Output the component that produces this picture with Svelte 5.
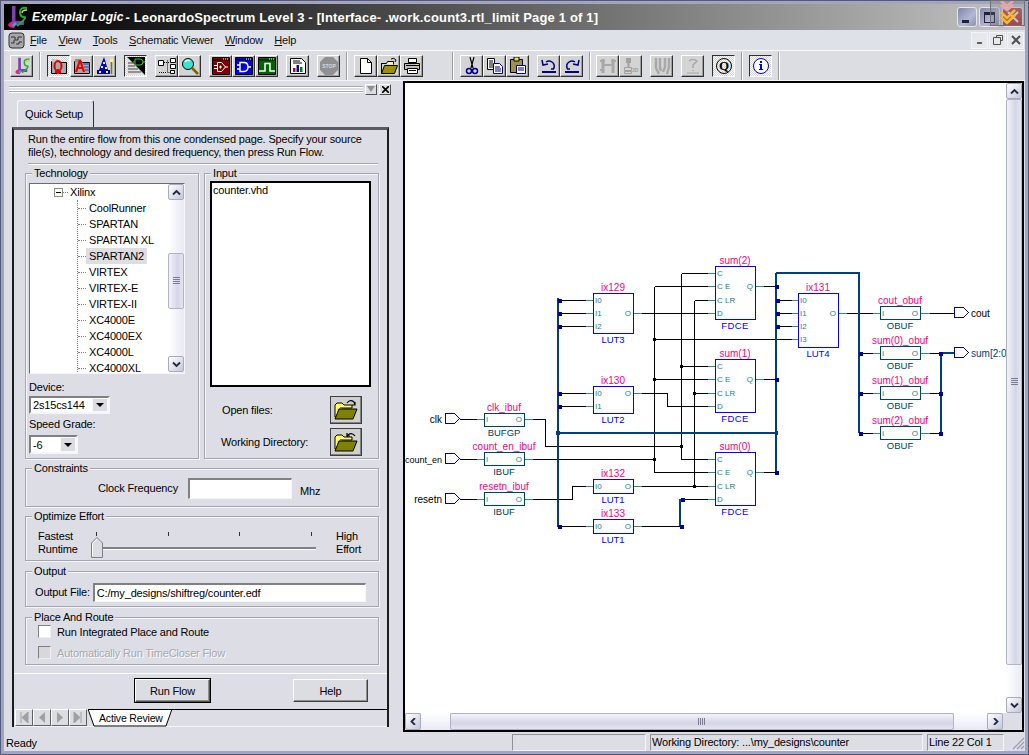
<script>
  const techItems = ['CoolRunner','SPARTAN','SPARTAN XL','SPARTAN2','VIRTEX','VIRTEX-E','VIRTEX-II','XC4000E','XC4000EX','XC4000L','XC4000XL'];

  const thin = [
    'M459 419H476','M532 419H545V446H681','M459 459H476','M532 459H654','M459 499H476','M532 499H572V486H585',
    'M558 300H585','M558 313H585','M558 326H585','M558 393H585','M558 406H585','M558 526H585',
    'M641 313H707','M641 393H667V406H707','M641 486H707','M641 526H680','M682 499H707',
    'M654 286V472','M654 286H707','M654 379H707','M654 472H707','M654 339H791',
    'M681 273V459','M681 273H707','M681 366H707','M681 459H707',
    'M694 300V486','M694 300H707','M694 393H707',
    'M763 286H776','M763 379H776','M763 472H776',
    'M776 300H791','M776 313H791','M776 326H791',
    'M846 313H872','M859 353H872','M859 393H872','M859 433H872',
    'M929 313H954','M929 353H940','M929 393H940','M929 433H940'
  ];
  const teal = [
    'M476 419H484','M524 419H532','M476 459H484','M524 459H532','M476 499H484','M524 499H532',
    'M585 300H593','M585 313H593','M585 326H593','M633 313H641','M585 393H593','M585 406H593','M633 393H641',
    'M585 486H593','M633 486H641','M585 526H593','M633 526H641',
    'M707 273H715','M707 286H715','M707 300H715','M707 313H715','M755 286H763',
    'M707 366H715','M707 379H715','M707 393H715','M707 406H715','M755 379H763',
    'M707 459H715','M707 472H715','M707 486H715','M707 499H715','M755 472H763',
    'M791 300H798','M791 313H798','M791 326H798','M791 339H798','M838 313H846',
    'M872 313H880','M920 313H929','M872 353H880','M920 353H929','M872 393H880','M920 393H929','M872 433H880','M920 433H929'
  ];
  const bus = [
    'M558 298V527','M558 433H776','M776 273V473','M776 273H859V433','M941 353V433','M941 353H954','M680 499V526'
  ];
  const busDots = [
    [558,299],[558,312],[558,325],[558,392],[558,405],[558,525],[680,525],[681,498],
    [775,285],[775,378],[775,471],[776,299],[776,312],[776,325],
    [859,352],[859,392],[859,432],[939,352],[939,392],[939,432]
  ];
  const junctions = [[654,339],[654,379],[654,459],[681,366],[681,446],[694,393],[694,486]];

  const ports = [
    {x:445,y:419,label:'clk',out:false},{x:445,y:459,label:'count_en',out:false,tight:true},{x:445,y:499,label:'resetn',out:false},
    {x:954,y:313,label:'cout',out:true},{x:954,y:353,label:'sum[2:0',out:true,bus:true}
  ];

  const cells = [
    {x:593,y:293,w:40,h:40,name:'ix129',type:'LUT3',pins:[['I0',300],['I1',313],['I2',326]],out:['O',313]},
    {x:593,y:386,w:40,h:27,name:'ix130',type:'LUT2',pins:[['I0',393],['I1',406]],out:['O',393]},
    {x:593,y:479,w:40,h:14,name:'ix132',type:'LUT1',pins:[['I0',486]],out:['O',486]},
    {x:593,y:519,w:40,h:14,name:'ix133',type:'LUT1',pins:[['I0',526]],out:['O',526]},
    {x:715,y:266,w:40,h:53,name:'sum(2)',type:'FDCE',ff:true,pins:[['C',273],['C E',286],['C LR',300],['D',313]],out:['Q',286]},
    {x:715,y:359,w:40,h:53,name:'sum(1)',type:'FDCE',ff:true,pins:[['C',366],['C E',379],['C LR',393],['D',406]],out:['Q',379]},
    {x:715,y:452,w:40,h:53,name:'sum(0)',type:'FDCE',ff:true,pins:[['C',459],['C E',472],['C LR',486],['D',499]],out:['Q',472]},
    {x:798,y:293,w:40,h:54,name:'ix131',type:'LUT4',pins:[['I0',300],['I1',313],['I2',326],['I3',339]],out:['O',313]},
    {x:484,y:413,w:40,h:13,name:'clk_ibuf',type:'BUFGP',pins:[['I',419]],out:['O',419],buf:true},
    {x:484,y:452,w:40,h:13,name:'count_en_ibuf',type:'IBUF',pins:[['I',459]],out:['O',459],buf:true},
    {x:484,y:492,w:40,h:13,name:'resetn_ibuf',type:'IBUF',pins:[['I',499]],out:['O',499],buf:true},
    {x:880,y:306,w:40,h:13,name:'cout_obuf',type:'OBUF',pins:[['I',313]],out:['O',313],buf:true},
    {x:880,y:346,w:40,h:13,name:'sum(0)_obuf',type:'OBUF',pins:[['I',353]],out:['O',353],buf:true},
    {x:880,y:386,w:40,h:13,name:'sum(1)_obuf',type:'OBUF',pins:[['I',393]],out:['O',393],buf:true},
    {x:880,y:426,w:40,h:13,name:'sum(2)_obuf',type:'OBUF',pins:[['I',433]],out:['O',433],buf:true}
  ];

  const toolbar = [
    [['ls']], 'sep',
    [['qfolder',1],['afolder'],['wizard']],
    [['schem',1]],
    [['hier'],['search']],
    [['redwin'],['bluewin'],['greenwin']],
    [['report']],
    [['stop']], 'sep',
    [['newdoc'],['open'],['print']], 'wide',
    [['cut'],['copy'],['paste']],
    [['undo'],['redo']], 'sepn',
    [['d1'],['d2']],
    [['d3']],
    [['d4']],
    [['qq',1]], 'sep',
    [['info',1]], 'sep'
  ];
  const menus = [['F','ile'],['V','iew'],['T','ools'],['S','chematic Viewer'],['W','indow'],['H','elp']];
</script>

{#snippet lsLogo(s)}
  <svg width={s} height={s} viewBox="0 0 24 24">
    <path d="M7 1h3.500v15H19v4H7z" fill="#7a3fb0"/>
    <path d="M3 20q3-6 8-2l-2 5q-5 0-6-3z" fill="#e0208a"/>
    <path d="M7 20l3-3 2 2-3 3z" fill="#1ab0e0"/>
    <path d="M22 3q-7-1-7 4t4 5-7 9" fill="none" stroke="#2aa838" stroke-width="2"/>
    <path d="M22 5q-5 0-5 3" fill="none" stroke="#b0e040" stroke-width="1.500"/>
  </svg>
{/snippet}

{#snippet openFolder(flag)}
  <svg width="24" height="22" viewBox="0 0 24 22">
    <path d="M1 6l2-2h5l2 2h8v3H6l-3 9H1z" fill="#ffff60" stroke="#000" stroke-width="1"/>
    <path d="M3 9h5v9H3z" fill="#f8e000" opacity=".7"/>
    <path d="M5 10h18l-4 10H1z" fill="#808000" stroke="#000" stroke-width="1"/>
    {#if flag === 'a'}
      <path d="M13 4q3-4 7-1l1 3M21 3v3h-3" fill="none" stroke="#000" stroke-width="1.200"/>
    {:else}
      <path d="M21 5q-3-4-7-1l-1 2M13 2v3h3" fill="none" stroke="#000" stroke-width="1.200"/>
    {/if}
  </svg>
{/snippet}

{#snippet icon(n)}
  {#if n === 'ls'}
    {@render lsLogo(18)}
  {:else}
  <svg width="18" height="18" viewBox="0 0 18 18" class="ico">
    {#if n === 'qfolder' || n === 'afolder'}
      <path d="M1.500 4.500h7l1 1h7v11h-15z" fill="#a8a8a8" stroke="#000"/>
      <path d="M2 2h6v3H2z" fill={n === 'qfolder' ? '#c8c8c8' : '#9a8a8a'}/>
      {#if n === 'qfolder'}
        <ellipse cx="8" cy="9" rx="3.500" ry="5" fill="none" stroke="#e00000" stroke-width="2"/>
        <path d="M8 12v5M5 15h6" stroke="#e00000" stroke-width="2"/>
      {:else}
        <path d="M7 3L3 15M7 3l4 12M4.500 11h6" fill="none" stroke="#f00000" stroke-width="2.200"/>
        <path d="M10 7h7M11 10h6M12 13h5" stroke="#2040c0"/>
      {/if}
    {:else if n === 'wizard'}
      <path d="M8 0L3 13h9z" fill="#0000c8"/>
      <path d="M1 13h13v4H1z" fill="#0000a0"/>
      <path d="M7 5h2v2H7zM5 9h2v2H5zM9 10h2v2H9zM3 14h2v2H3zM10 14h2v2h-2z" fill="#ffff00"/>
      <path d="M15.500 5v12" stroke="#807000" stroke-width="1.500"/>
      <path d="M14 2h3v3h-3z" fill="#fff080"/>
    {:else if n === 'schem'}
      <path d="M0 0h18v18z" fill="#000"/>
      <path d="M0 1l16 17H0z" fill="#e0e0e0"/>
      <path d="M1 6h5M1 9h7M1 12h10M1 15h13" stroke="#444"/>
      <path d="M8 2h5q3 0 3 3t-3 3H8z" fill="#000" stroke="#30d030"/>
      <path d="M6 5h2M16 5h2" stroke="#30d030"/>
    {:else if n === 'hier'}
      <path d="M.5 3.500h5v5h-5zM12.500 1.500h5v4h-5zM12.500 7.500h5v4h-5zM12.500 13.500h4v3h-4z" fill="#fff" stroke="#000"/>
      <path d="M6 5.500h6M9.500 3.500v12h3M1 15.500h8" fill="none" stroke="#000" stroke-dasharray="1 1"/>
    {:else if n === 'search'}
      <circle cx="7" cy="7" r="5.500" fill="#40e0d0" stroke="#000"/>
      <path d="M4 5q2-3 5-1" fill="none" stroke="#fff" stroke-width="1.500"/>
      <path d="M11 11l6 6" stroke="#806000" stroke-width="2.500"/>
    {:else if n === 'redwin' || n === 'bluewin' || n === 'greenwin'}
      <path d="M.5 .5h17v17H.5z" fill={n === 'redwin' ? '#800000' : n === 'bluewin' ? '#0000d8' : '#006400'} stroke="#000"/>
      <path d="M1 3h16" stroke="#000"/>
      <path d="M11 2h1M13 2h1M15 2h1" stroke="#fff"/>
      {#if n === 'redwin'}
        <path d="M5.500 5.500h4l4 4.500-4 4.500h-4z" fill="none" stroke="#fff"/>
        <path d="M2 8.500h3.500M2 11.500h3.500M13 10h3M7 10h3M8.500 8.500v3" stroke="#fff"/>
      {:else if n === 'bluewin'}
        <path d="M5 5.500h4q4 0 4 4.500t-4 4.500H5z" fill="none" stroke="#fff" stroke-width="1.400"/>
        <path d="M2 8h3M2 12h3M13 10h3" stroke="#fff" stroke-width="1.400"/>
      {:else}
        <path d="M1 14h6V6.500h5V14h5" fill="none" stroke="#fff" stroke-width="1.500"/>
      {/if}
    {:else if n === 'report'}
      <path d="M1.500 1.500h11l4 4v11h-15z" fill="#fff" stroke="#000"/>
      <path d="M4 4h7M4 6h9" stroke="#000"/>
      <path d="M4 11h2.500v4H4z" fill="#e00000"/><path d="M7.500 8h2.500v7H7.500z" fill="#0000c0"/><path d="M11 10h2.500v5H11z" fill="#008000"/>
    {:else if n === 'stop'}
      <path d="M5 0h8l5 5v8l-5 5H5l-5-5V5z" fill="#909090"/>
      <text x="9" y="11" text-anchor="middle" class="stop">STOP</text>
    {:else if n === 'newdoc'}
      <path d="M3.500 1.500h7l4 4v11h-11z" fill="#fff" stroke="#000"/><path d="M10.500 1.500v4h4" fill="none" stroke="#000"/>
    {:else if n === 'open'}
      <path d="M1.500 6.500h5l1-2h6v3" fill="#ffff90" stroke="#000"/>
      <path d="M1.500 6v10.500l3-8h13l-3 8h-13" fill="#a09000" stroke="#000"/>
      <path d="M11 2q3-2 5 1l-1 2" fill="none" stroke="#000"/>
    {:else if n === 'print'}
      <path d="M5.500 1.500h8v4h-8z" fill="#fff" stroke="#000"/>
      <path d="M1.500 6.500h15v6h-15z" fill="#c0c0c0" stroke="#000"/>
      <path d="M4.500 11.500h10v5h-10z" fill="#fff" stroke="#000"/>
      <path d="M3 8.500h13M6 13.500h7" stroke="#000"/>
      <path d="M13 7h2v1h-2z" fill="#ffff00"/>
    {:else if n === 'cut'}
      <path d="M7 0l3 11M11 0L8 11" stroke="#000" stroke-width="1.200" fill="none"/>
      <circle cx="6" cy="14" r="2.500" fill="none" stroke="#000080" stroke-width="1.500"/>
      <circle cx="12" cy="14" r="2.500" fill="none" stroke="#000080" stroke-width="1.500"/>
    {:else if n === 'copy'}
      <path d="M1.500 1.500h7v11h-7z" fill="#fff" stroke="#000"/>
      <path d="M3 4h4M3 6h4M3 8h4M3 10h4" stroke="#000"/>
      <path d="M7.500 6.500h6l3 3v7h-9z" fill="#fff" stroke="#000080"/>
      <path d="M9 10h5M9 12h6M9 14h6" stroke="#000080"/>
    {:else if n === 'paste'}
      <path d="M1.500 2.500h12v13h-12z" fill="#a09050" stroke="#000"/>
      <path d="M5 0h5v4H5z" fill="#e8e060" stroke="#000"/>
      <path d="M7.500 8.500h9v8h-9z" fill="#fff" stroke="#000080"/>
      <path d="M9 11h6M9 13h6" stroke="#000080"/>
    {:else if n === 'undo'}
      <path d="M6 5q3-2 6 0t2 6l-1 1M11 12h3" fill="none" stroke="#000080" stroke-width="1.500"/>
      <path d="M2 3l1 5 5-1" fill="none" stroke="#000080" stroke-width="1.500"/>
      <path d="M2 14h14v2H2z" fill="#000080"/>
    {:else if n === 'redo'}
      <path d="M12 5q-3-2-6 0t-2 6l1 1M7 12H4" fill="none" stroke="#000080" stroke-width="1.500"/>
      <path d="M16 3l-1 5-5-1" fill="none" stroke="#000080" stroke-width="1.500"/>
      <path d="M2 14h14v2H2z" fill="#000080"/>
    {:else if n === 'd1'}
      <path d="M4 2v14M14 2v14" stroke="#a8a8a8" stroke-width="3"/><path d="M3 8h12M1 4h5M12 4h5M1 13h4" stroke="#a8a8a8" stroke-width="2"/>
    {:else if n === 'd2'}
      <path d="M4 1h5v5H4z" fill="#a0a0a0"/><path d="M6.500 6v5" stroke="#a0a0a0" stroke-width="2"/><path d="M2.500 10.500h7v3h-7zM2.500 14.500h7v2h-7z" fill="none" stroke="#a0a0a0"/>
      <text x="10" y="15" class="d2t">3D</text>
    {:else if n === 'd3'}
      <path d="M3 1v10l3 6M7 1v10l1 3M12 1v9l-2 5M16 1v9l-2 7" fill="none" stroke="#a8a8a8" stroke-width="2.400"/>
    {:else if n === 'd4'}
      <path d="M5 4q4-3 8 0l-4 4v3M9 13v1" fill="none" stroke="#a8a8a8" stroke-width="1.500"/><path d="M3 16h12" stroke="#a8a8a8"/>
    {:else if n === 'qq'}
      <circle cx="9" cy="9" r="7.500" fill="none" stroke="#000"/>
      <text x="9" y="13" text-anchor="middle" class="qt">Q</text>
    {:else if n === 'info'}
      <circle cx="9" cy="9" r="7.500" fill="#fff" stroke="#0000c0"/>
      <path d="M8 4h2v2H8zM7 7h3v5h1v1H7v-1h1V8H7z" fill="#0000e0"/>
    {/if}
  </svg>
  {/if}
{/snippet}

{#snippet scrollBtn(dir)}
  <span class="sbtn">
    <svg width="9" height="7" viewBox="0 0 9 7">
      {#if dir === 'up'}<path d="M1 5.500l3.500-3.500 3.500 3.500" fill="none" stroke="#202840" stroke-width="1.800"/>
      {:else if dir === 'down'}<path d="M1 1.500l3.500 3.500 3.500-3.500" fill="none" stroke="#202840" stroke-width="1.800"/>
      {:else if dir === 'left'}<path d="M6 0l-3.500 3.500 3.500 3.500" fill="none" stroke="#202840" stroke-width="1.800"/>
      {:else}<path d="M3 0l3.500 3.500-3.500 3.500" fill="none" stroke="#202840" stroke-width="1.800"/>{/if}
    </svg>
  </span>
{/snippet}

<div class="window">
  <header class="title">
    <span class="tlogo">{@render lsLogo(24)}</span>
    <span class="brand">Exemplar Logic</span>
    <span class="ttext">- LeonardoSpectrum Level 3 - [Interface- .work.count3.rtl_limit Page 1 of 1]</span>
    <span class="wbtns">
      <span class="wb w0"><i class="wmin"></i></span>
      <span class="wb"><i class="wmax"></i></span>
      <span class="wb close">
        <svg width="12" height="12" viewBox="0 0 12 12"><path d="M1 1l10 10M11 1L1 11" stroke="#f4e8e8" stroke-width="2"/></svg>
      </span>
    </span>
  </header>
  <span class="ghost">
    <svg width="35" height="26" viewBox="0 0 35 26"><path d="M11 1l6 5 6-5M11 5l6 5 6-5" fill="none" stroke="#e8a8a8" stroke-width="2.500"/><path d="M11 12l6 6 8-8M11 17l6 6 8-8" fill="none" stroke="#f8b830" stroke-width="2.500"/></svg>
  </span>

  <nav class="menubar">
    <span class="chip">
      <svg width="17" height="17" viewBox="0 0 17 17"><rect x="1" y="1" width="15" height="15" rx="3" fill="#a8a8a8" stroke="#303030"/><path d="M3 5h4v3h3V5h4M3 11h3V8M8 12h3v-2h3" fill="none" stroke="#303030"/></svg>
    </span>
    {#each menus as m}
      <span class="menu"><u>{m[0]}</u>{m[1]}</span>
    {/each}
    <span class="mdi">
      <span class="mb">
        <svg width="10" height="10" viewBox="0 0 10 10"><path d="M2 8h5" stroke="#606060" stroke-width="2"/></svg>
      </span>
      <span class="mb">
        <svg width="10" height="10" viewBox="0 0 10 10"><path d="M3.500 2.500V.5h6v5H7.500M.5 2.500h7v7h-7z" fill="none" stroke="#505050"/></svg>
      </span>
      <span class="mb">
        <svg width="10" height="10" viewBox="0 0 10 10"><path d="M1 1l8 8M9 1l-8 8" stroke="#505050" stroke-width="2"/></svg>
      </span>
    </span>
  </nav>

  <div class="toolbar">
    {#each toolbar as item}
      {#if item === 'sep'}<span class="sep"></span>
      {:else if item === 'sepn'}<span class="sep tight"></span>
      {:else if item === 'wide'}<span class="sep wide"></span>
      {:else}
        <span class="tg">
          {#each item as b}
            <span class="tb" class:pressed={b[1]}>{@render icon(b[0])}</span>
          {/each}
        </span>
      {/if}
    {/each}
  </div>

  <main class="main">
    <aside class="dock">
      <div class="griprow">
        <span class="grip"></span>
        <span class="gbtn"><svg width="8" height="6" viewBox="0 0 8 6"><path d="M0 0h8L4 6z" fill="#909090"/></svg></span>
        <span class="gbtn"><svg width="7" height="7" viewBox="0 0 7 7"><path d="M0 0l7 7M7 0L0 7" stroke="#000" stroke-width="1.600"/></svg></span>
      </div>
      <div class="tabrow"><span class="tab">Quick Setup</span></div>
      <section class="panel">
        <p class="desc">Run the entire flow from this one condensed page. Specify your source<br/>file(s), technology and desired frequency, then press Run Flow.</p>
        <hr class="rule"/>
        <div class="toprow">
          <div class="group tech">
            <span class="legend">Technology</span>
            <div class="tree">
              <div class="treebody">
                <div class="tnode">
                  <span class="exp"><i></i></span><span class="dots"></span><span>Xilinx</span>
                </div>
                <div class="tleaves">
                  {#each techItems as t}
                    <div class="leaf"><span class="hd"></span><span class="ltext" class:sel={t === 'SPARTAN2'}>{t}</span></div>
                  {/each}
                </div>
              </div>
              <div class="vs small">
                {@render scrollBtn('up')}
                <span class="trk t1"></span>
                <span class="thumbv small"><b></b></span>
                <span class="trk t2"></span>
                {@render scrollBtn('down')}
              </div>
            </div>
            <div class="lbl dev">Device:</div>
            <div class="combo c1"><span class="ctext">2s15cs144</span><span class="carrow"><i></i></span></div>
            <div class="lbl spd">Speed Grade:</div>
            <div class="combo c2"><span class="ctext">-6</span><span class="carrow"><i></i></span></div>
          </div>
          <div class="group input">
            <span class="legend">Input</span>
            <div class="listbox">counter.vhd</div>
            <div class="frow first"><span>Open files:</span><span class="fbtn">{@render openFolder('a')}</span></div>
            <div class="frow"><span>Working Directory:</span><span class="fbtn">{@render openFolder('b')}</span></div>
          </div>
        </div>

        <div class="group cons">
          <span class="legend">Constraints</span>
          <span class="cf">Clock Frequency</span>
          <span class="field freq"></span>
          <span class="mhz">Mhz</span>
        </div>

        <div class="group opt">
          <span class="legend">Optimize Effort</span>
          <span class="s2">Fastest<br/>Runtime</span>
          <div class="slider">
            <div class="ticks"><i></i><i></i><i></i><i></i></div>
            <div class="track"></div>
            <svg class="thumb" width="12" height="21" viewBox="0 0 12 21"><path d="M.5 20.500V6L6 .5 11.500 6v14.500z" fill="#dcdde4" stroke="#808080"/><path d="M1.500 19V6.500L6 2" fill="none" stroke="#fff"/></svg>
          </div>
          <span class="s3">High<br/>Effort</span>
        </div>

        <div class="group outg">
          <span class="legend">Output</span>
          <span>Output File:</span>
          <span class="field path">C:/my_designs/shiftreg/counter.edf</span>
        </div>

        <div class="group par">
          <span class="legend">Place And Route</span>
          <label class="ck"><span class="box"></span>Run Integrated Place and Route</label>
          <label class="ck off"><span class="box"></span>Automatically Run TimeCloser Flow</label>
        </div>

        <hr class="rule2"/>
        <div class="actions">
          <span class="pbtn def">Run Flow</span>
          <span class="pbtn help">Help</span>
        </div>
        <div class="tabstrip">
          <span class="nav">
            <span class="nb"><svg width="10" height="11" viewBox="0 0 10 11"><path d="M2 0v11M9 0L3 5.500 9 11z" fill="#a0a0a0" stroke="#a0a0a0"/></svg></span>
            <span class="nb"><svg width="8" height="11" viewBox="0 0 8 11"><path d="M7 0L1 5.500 7 11z" fill="#a0a0a0"/></svg></span>
            <span class="nb"><svg width="8" height="11" viewBox="0 0 8 11"><path d="M1 0l6 5.500L1 11z" fill="#a0a0a0"/></svg></span>
            <span class="nb"><svg width="10" height="11" viewBox="0 0 10 11"><path d="M8 0v11M1 0l6 5.500L1 11z" fill="#a0a0a0" stroke="#a0a0a0"/></svg></span>
          </span>
          <span class="ar">
            <svg width="85" height="18" viewBox="0 0 85 18"><path d="M0 0l6 17H78L84 0" fill="#fff" stroke="#000"/><path d="M1 0H84" stroke="#000"/></svg>
            <span>Active Review</span>
          </span>
        </div>
      </section>
    </aside>

    <section class="schem">
      <div class="schemtop">
        <div class="canvas">
          <svg width="601" height="630" viewBox="405 83 601 630" class="diagram">
            <g fill="none" shape-rendering="crispEdges">
              {#each thin as d}<path {d} stroke="#000" transform="translate(.5 .5)"/>{/each}
              {#each teal as d}<path {d} stroke="#3a8a80" transform="translate(.5 .5)"/>{/each}
              {#each bus as d}<path {d} stroke="#003f7f" stroke-width="2"/>{/each}
            </g>
            <g shape-rendering="crispEdges">
              {#each busDots as p}<rect x={p[0]} y={p[1]} width="4" height="4" fill="#0000a0"/>{/each}
              <rect x="556" y="431" width="4" height="4" fill="#003f7f"/>
              <rect x="775" y="431" width="3" height="4" fill="#003f7f"/>
              {#each junctions as p}<rect x={p[0]-1} y={p[1]-1} width="3" height="3" fill="#000"/>{/each}
            </g>
            {#each ports as p}
              <path d={`M${p.x+.5} ${p.y-5.5}h9l5 5-5 5h-9z`} fill="#fff" stroke="#0000a0" shape-rendering="crispEdges"/>
              {#if p.out}
                <text x={p.x+17} y={p.y+3.500} class="plabel" class:busl={p.bus}>{p.label}</text>
              {:else}
                <text x={p.x-3} y={p.y+3.500} text-anchor="end" class="plabel" class:tight={p.tight}>{p.label}</text>
              {/if}
            {/each}
            {#each cells as c}
              <rect x={c.x+.5} y={c.y+.5} width={c.w} height={c.h} fill="#fff" stroke={c.buf ? '#004060' : '#0000ff'} shape-rendering="crispEdges"/>
              <text x={c.x+20} y={c.y-2.500} text-anchor="middle" class="iname">{c.name}</text>
              <text x={c.x+20} y={c.y+c.h+9.500} text-anchor="middle" class="itype" class:bufl={c.buf} class:ff={c.ff}>{c.type}</text>
              {#each c.pins as pin}
                <text x={c.x+2} y={pin[1]+3} class="pin">{pin[0]}</text>
              {/each}
              <text x={c.x+c.w-2} y={c.out[1]+3} text-anchor="end" class="pin">{c.out[0]}</text>
            {/each}
          </svg>
        </div>
        <div class="vs big">
          {@render scrollBtn('up')}
          <span class="thumbv"><b></b></span>
          <span class="trk"></span>
          {@render scrollBtn('down')}
        </div>
      </div>
      <div class="hs">
        {@render scrollBtn('left')}
        <span class="trkh a"></span>
        <span class="thumbh"><b></b></span>
        <span class="trkh b"></span>
        {@render scrollBtn('right')}
        <span class="corner"></span>
      </div>
    </section>
  </main>

  <footer class="status">
    <span class="ready">Ready</span>
    <span class="cell e"></span>
    <span class="cell wd">Working Directory: ...\my_designs\counter</span>
    <span class="cell ln">Line 22 Col 1</span>
    <svg class="sgrip" width="14" height="14" viewBox="0 0 14 14"><path d="M13 2L2 13M13 6l-7 7M13 10l-3 3" stroke="#9a9aa8" stroke-width="1.200"/></svg>
  </footer>
</div>

<style>
  :global(body) { margin: 0; background: #dddee5; }
  .window {
    width: 1029px; height: 755px; box-sizing: border-box;
    display: flex; flex-direction: column;
    background: #dddee5;
    border: 4px solid #a3a5bf;
    outline: 1px solid #555a7c; outline-offset: -1px;
    font: 11px "Liberation Sans", Arial, sans-serif; letter-spacing: -.17px; color: #000;
    position: relative;
  }
  .title {
    height: 26px; flex: none; display: flex; align-items: center;
    background: linear-gradient(90deg, #000 0%, #151515 12%, #c4c4c4 100%);
    color: #fff; padding-left: 1px;
  }
  .tlogo { display: flex; width: 27px; }
  .brand { font: italic bold 12px "Liberation Sans", sans-serif; letter-spacing: .15px; }
  .ttext { font: bold 13px "Liberation Sans", sans-serif; margin-left: 2px; letter-spacing: .165px; }
  .wbtns { margin-left: auto; display: flex; gap: 2px; margin-right: 2px; position: relative; }
  .wb {
    width: 21px; height: 20px; border-radius: 3px; display: flex; align-items: center; justify-content: center;
    background: linear-gradient(135deg, #8085a8, #b4b8d6 60%, #8a8fb0); border: 1px solid #e4e4f0; box-sizing: border-box; overflow: hidden;
  }
  .w0 { width: 20px; }
  .wb.close { background: linear-gradient(#b06060, #b83838); }
  .wmin { width: 7px; height: 3px; background: #223; margin-top: 8px; margin-right: 3px; }
  .wmax { width: 11px; height: 11px; border: 1px solid #223; border-top-width: 3px; box-sizing: border-box; }
  .ghost { position: absolute; left: 986px; top: -4px; width: 35px; height: 26px; box-sizing: border-box; background: rgba(110,110,120,.28); border: 1px solid #707078; overflow: hidden; }
  .ghost svg { display: block; margin: -1px; }

  .menubar { height: 21px; flex: none; display: flex; align-items: center; background: #dfe1e8; border-bottom: 1px solid #fafafa; box-sizing: border-box; }
  .chip { display: flex; width: 22px; margin-left: 4px; }
  .menu { margin-right: 11.600px; color: #111; letter-spacing: -.22px; }
  .menu u { text-decoration: underline; }
  .mdi { margin-left: auto; display: flex; gap: 1px; margin-right: 1px; }
  .mb { width: 17px; height: 17px; display: flex; align-items: center; justify-content: center; background: #e6e8ec; border: 1px solid #f4f4f8; box-sizing: border-box; }

  .toolbar { height: 30px; flex: none; display: flex; align-items: center; padding-left: 6px; box-sizing: border-box; border-bottom: 1px solid #f4f4f8; background: #dcdde2; }
  .tg { display: flex; }
  .tg + .tg { margin-left: 8px; }
  .sep { width: 1px; height: 28px; background: #9c9c9c; border-right: 1px solid #fff; margin: 0 6px; }
  .sep.wide { margin-left: 29px; }
  .sep.tight { margin-right: 5px; }
  .tb {
    width: 23px; height: 22px; box-sizing: border-box; display: flex; align-items: center; justify-content: center;
    background: #d4d4d4; border: 1px solid; border-color: #fff #303030 #303030 #fff; box-shadow: inset -1px -1px 0 #a0a0a0;
  }
  .tb.pressed {
    border-color: #303030 #fff #fff #303030; box-shadow: none;
    background-color: #e8e8e8;
    background-image: repeating-conic-gradient(#fff 0 25%, #d4d4d4 0 50%);
    background-size: 2px 2px;
  }
  .stop { font: bold 5px "Liberation Sans", sans-serif; fill: #d8d8d8; letter-spacing: 0; }
  .d2t { font: bold 5px "Liberation Sans", sans-serif; fill: #a0a0a0; letter-spacing: 0; }
  .qt { font: bold 13px "Liberation Serif", serif; fill: #000; letter-spacing: 0; }

  .main { height: 652px; flex: none; display: flex; }
  .dock { width: 399px; flex: none; box-sizing: border-box; padding: 3px 0 0 5px; }
  .griprow { display: flex; height: 10px; align-items: center; gap: 2px; }
  .grip { width: 354px; height: 6px; border-top: 1px solid #a8a8b0; border-bottom: 1px solid #a8a8b0; box-shadow: inset 0 1px 0 #fff, inset 0 -1px 0 #fff, 0 1px 0 #fff; box-sizing: border-box; }
  .gbtn { width: 12px; height: 11px; box-sizing: border-box; display: flex; align-items: center; justify-content: center; background: #dcdde2; border: 1px solid; border-color: #fff #505050 #505050 #fff; }
  .tabrow { margin-top: 6px; height: 27px; padding-left: 8px; }
  .tab { display: flex; align-items: center; width: 77px; height: 27px; box-sizing: border-box; padding-left: 7px; border: 1px solid #f8f8fc; border-right: 1px solid #303030; border-bottom: 0; border-radius: 3px 3px 0 0; }

  .panel {
    width: 377px; height: 600px; box-sizing: border-box; margin-left: 3px;
    border-left: 2px solid #1c1c1c; border-right: 2px solid #1c1c1c;
    border-top: 3px solid #5a5a60;
    display: flex; flex-direction: column; position: relative;
  }
  .desc { margin: 3px 0 0 14px; line-height: 13px; }
  .rule { border: 0; border-top: 1px solid #a8a8b0; border-bottom: 1px solid #fff; margin: 4px 6px 0 14px; width: 350px; box-sizing: border-box; }
  .toprow { display: flex; gap: 5px; margin: 8px 0 0 11px; }
  .group { position: relative; box-sizing: border-box; border: 1px solid #a4a5ae; box-shadow: 1px 1px 0 #f6f6fa, inset 1px 1px 0 #f6f6fa; }
  .legend { position: absolute; left: 6px; top: -8px; padding: 0 2px; background: #dddee5; line-height: 14px; white-space: nowrap; }
  .tech { width: 174px; height: 286px; padding: 9px 0 0 3px; }
  .input { width: 175px; height: 286px; padding: 7px 0 0 5px; }
  .tree { width: 156px; height: 191px; box-sizing: border-box; background: #fff; display: flex; border: 1px solid; border-color: #6c6c6c #f6f6fa #f6f6fa #6c6c6c; overflow: hidden; }
  .treebody { width: 138px; flex: none; height: 189px; overflow: hidden; }
  .tnode { height: 16px; display: flex; align-items: center; padding-left: 24px; }
  .exp { width: 9px; height: 9px; box-sizing: border-box; border: 1px solid #8c8c78; display: flex; align-items: center; justify-content: center; }
  .exp i { width: 5px; height: 1px; background: #000; }
  .dots { width: 5px; border-top: 1px dotted #808080; margin: 0 2px 0 0; }
  .tleaves { margin-left: 47px; border-left: 1px dotted #808080; }
  .leaf { height: 16px; display: flex; align-items: center; white-space: nowrap; }
  .hd { width: 8px; border-top: 1px dotted #808080; flex: none; }
  .ltext { padding: 1px 3px; line-height: 14px; }
  .ltext.sel { background: #dedee2; }
  .vs { flex: none; display: flex; flex-direction: column; background: linear-gradient(90deg, #fff, #e8eaf4); }
  .vs.small { width: 16px; height: 189px; }
  .vs.big { width: 16px; height: 630px; }
  .trk { display: block; flex: 1; }
  .t1 { flex: none; height: 53px; }
  .t2 { flex: none; height: 47px; }
  .sbtn { flex: none; width: 16px; height: 16px; box-sizing: border-box; display: flex; align-items: center; justify-content: center; border: 1px solid #a8abc0; border-radius: 2px; background: linear-gradient(135deg, #fff, #c4c7da); }
  .thumbv { flex: none; display: flex; align-items: center; justify-content: center; height: 566px; width: 16px; box-sizing: border-box; border: 1px solid #b0b2c6; border-radius: 2px; background: linear-gradient(90deg, #f2f3fa, #d4d6e6 60%, #e4e5f0); }
  .thumbv.small { height: 56px; }
  .thumbv b { width: 7px; height: 8px; display: block; background: repeating-linear-gradient(#7a7c90 0 1px, transparent 1px 2px); }

  .lbl { line-height: 13px; }
  .dev { margin-top: 7px; }
  .spd { margin-top: 4px; }
  .combo { display: flex; align-items: center; box-sizing: border-box; background: #fff; border: 2px solid; border-color: #808080 #f6f6fa #f6f6fa #808080; }
  .c1 { width: 81px; height: 18px; margin-top: 2px; }
  .c2 { width: 49px; height: 19px; margin-top: 4px; }
  .ctext { flex: 1; padding-left: 2px; }
  .carrow { width: 16px; height: 100%; background: #dcdce0; border: 1px solid #f8f8f8; box-sizing: border-box; display: flex; align-items: center; justify-content: center; }
  .carrow i { border: 4px solid transparent; border-top: 4px solid #000; border-bottom: 0; }

  .listbox { width: 161px; height: 206px; box-sizing: border-box; border: 2px solid #000; background: #fff; padding: 0 0 0 1px; line-height: 14px; }
  .frow { display: flex; align-items: center; justify-content: space-between; width: 141px; margin-left: 11px; margin-top: 5px; height: 27px; }
  .frow.first { margin-top: 9px; margin-left: 12px; width: 140px; }
  .fbtn { width: 32px; height: 28px; box-sizing: border-box; display: flex; align-items: center; justify-content: center; background: #d0d0d0; border: 1px solid; border-color: #fff #303030 #303030 #fff; box-shadow: inset -1px -1px 0 #808080; outline: 1px solid #404040; outline-offset: -1px; }

  .cons { margin: 9px 0 0 11px; width: 354px; height: 39px; display: flex; align-items: center; }
  .cf { margin-left: 72px; margin-top: 2px; }
  .field { box-sizing: border-box; background: #fff; border: 1px solid; border-color: #808080 #f6f6fa #f6f6fa #808080; display: block; }
  .freq { width: 104px; height: 21px; margin-left: 10px; margin-top: 3px; border-width: 2px 1px 1px 2px; }
  .mhz { margin-left: 8px; margin-top: 7px; }
  .opt { margin: 9px 0 0 11px; width: 354px; height: 46px; display: flex; padding-left: 12px; padding-top: 13px; line-height: 13px; }
  .s2 { width: 53px; flex: none; }
  .s3 { margin-left: 20px; }
  .slider { width: 225px; flex: none; position: relative; margin-top: 0; height: 30px; }
  .ticks { display: flex; justify-content: space-between; padding: 0 0 0 5px; width: 216px; }
  .ticks i { width: 1px; height: 4px; background: #303030; margin-top: 2px; }
  .track { height: 2px; background: #808088; border-bottom: 1px solid #fff; margin: 11px 0 0 9px; width: 216px; }
  .thumb { position: absolute; left: 0; top: 7px; }
  .outg { margin: 10px 0 0 11px; width: 354px; height: 36px; display: flex; align-items: center; padding: 6px 0 0 9px; }
  .path { width: 273px; height: 19px; margin-left: 3px; padding-left: 2px; line-height: 16px; border-width: 2px 1px 1px 2px; }
  .par { margin: 10px 0 0 11px; width: 354px; height: 48px; padding: 7px 0 0 12px; }
  .ck { display: flex; align-items: center; height: 13px; gap: 6px; }
  .ck + .ck { margin-top: 8px; }
  .box { width: 13px; height: 13px; box-sizing: border-box; background: #fff; border: 1px solid; border-color: #808080 #f0f0f0 #f0f0f0 #808080; }
  .off { color: #a6a6ac; text-shadow: 1px 1px 0 #fff; }
  .off .box { background: #d8d8dc; }
  .rule2 { border: 0; border-top: 1px solid #fff; margin: 8px 0 0 0; width: 100%; }
  .actions { display: flex; margin: 5px 0 0 121px; gap: 83px; }
  .pbtn { width: 75px; height: 23px; box-sizing: border-box; display: flex; align-items: center; justify-content: center; background: #dcdde2; border: 1px solid; border-color: #fff #404040 #404040 #fff; box-shadow: inset -1px -1px 0 #909090; }
  .pbtn.def { outline: 1px solid #000; border-color: #fff #505050 #505050 #fff; }
  .tabstrip { margin-top: 7px; height: 18px; display: flex; border-bottom: 1px solid #f6f6fa; box-sizing: border-box; position: relative; }
  .tabstrip::after { content: ''; position: absolute; left: 74px; right: 0; top: 0; border-top: 1px solid #000; }
  .nav { display: flex; margin-left: 1px; }
  .nb { width: 18px; height: 17px; box-sizing: border-box; display: flex; align-items: center; justify-content: center; background: #dcdde2; border: 1px solid; border-color: #fff #606060 #606060 #fff; }
  .ar { position: relative; width: 85px; height: 18px; display: block; margin-left: 1px; }
  .ar svg { display: block; }
  .ar span { position: absolute; left: 11px; top: 2px; font-size: 10.500px; line-height: 14px; white-space: nowrap; z-index: 1; }

  .schem { width: 621px; flex: none; display: flex; flex-direction: column; border: 2px solid #000; box-sizing: border-box; height: 651px; }
  .schemtop { display: flex; height: 630px; flex: none; }
  .canvas { width: 601px; height: 630px; flex: none; background: #fff; overflow: hidden; }
  .diagram { display: block; }
  .plabel { font: 10px "Liberation Sans", sans-serif; fill: #000; letter-spacing: 0; }
  .plabel.tight { font-size: 9px; }
  .busl { fill: #003f7f; }
  .iname { font: 10px "Liberation Sans", sans-serif; fill: #ff0080; letter-spacing: 0; }
  .itype { font: 9.500px "Liberation Sans", sans-serif; fill: #0000ff; letter-spacing: 0; }
  .itype.ff { letter-spacing: .4px; }
  .bufl { fill: #004060; }
  .pin { font: 8px "Liberation Sans", sans-serif; fill: #2a7f7f; letter-spacing: 0; }
  .hs { height: 17px; flex: none; display: flex; align-items: flex-start; }
  .trkh { display: block; height: 17px; background: linear-gradient(#fff, #e8eaf4); }
  .trkh.a { width: 29px; }
  .trkh.b { width: 33px; }
  .thumbh { width: 504px; height: 17px; box-sizing: border-box; display: flex; align-items: center; justify-content: center; border: 1px solid #b0b2c6; border-radius: 2px; background: linear-gradient(#f2f3fa, #d4d6e6 60%, #e4e5f0); }
  .thumbh b { width: 8px; height: 7px; background: repeating-linear-gradient(90deg, #7a7c90 0 1px, transparent 1px 2px); }
  .hs .sbtn { height: 17px; }
  .corner { flex: 1; height: 17px; background: #dddee5; }

  .status { height: 18px; flex: none; display: flex; align-items: center; position: relative; }
  .ready { width: 508px; padding-left: 2px; box-sizing: border-box; padding-top: 1px; }
  .cell { height: 17px; box-sizing: border-box; border: 1px solid; border-color: #909098 #f6f6fa #f6f6fa #909098; line-height: 15px; padding-left: 1px; white-space: nowrap; overflow: hidden; }
  .e { width: 134px; margin-right: 4px; }
  .wd { width: 273px; margin-right: 4px; }
  .ln { width: 77px; }
  .sgrip { position: absolute; right: 0; bottom: 1px; }
</style>
